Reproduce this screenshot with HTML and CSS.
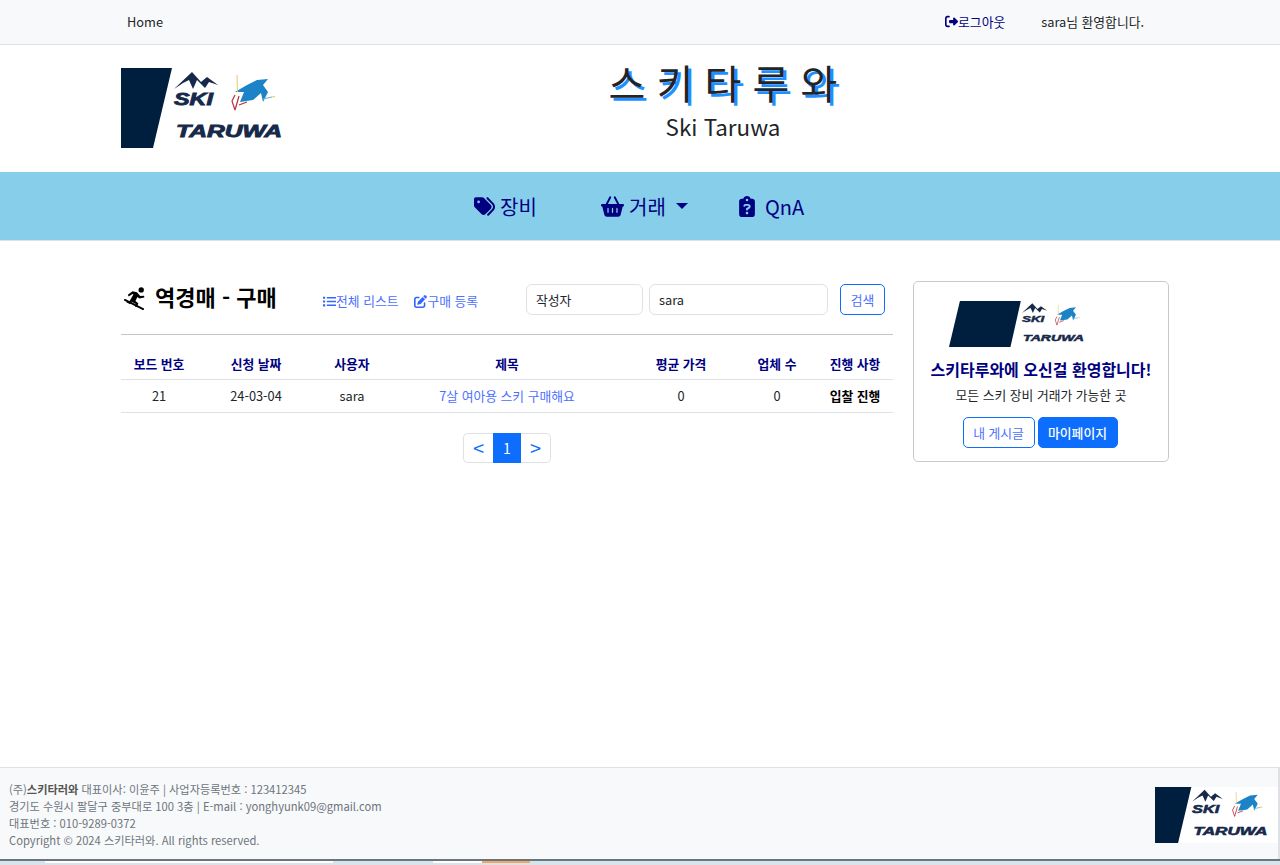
FILE: index.html
```html
<!DOCTYPE html>
<html lang="ko">
<head>
  <meta charset="UTF-8">
  <meta name="viewport" content="width=device-width, initial-scale=1.0">
  <title>스키타루와</title>
  <link rel="stylesheet" href="styles.css">
</head>
<body>
  <div class="topbar">
    <div class="topbar-inner">
      <a class="home-link" href="#">Home</a>
      <div class="topbar-right">
        <a class="logout-link" href="#">
          <svg class="icon-logout" viewBox="0 0 512 512"><path d="M377.9 105.9L500.7 228.7c7.2 7.2 11.3 17.1 11.3 27.3s-4.1 20.1-11.3 27.3L377.9 406.1c-6.4 6.4-15 9.9-24 9.9c-18.7 0-33.9-15.2-33.9-33.9l0-62.1-128 0c-17.7 0-32-14.3-32-32l0-64c0-17.7 14.3-32 32-32l128 0 0-62.1c0-18.7 15.2-33.9 33.9-33.9c9 0 17.6 3.6 24 9.9zM160 96L96 96c-17.7 0-32 14.3-32 32l0 256c0 17.7 14.3 32 32 32l64 0c17.7 0 32 14.3 32 32s-14.3 32-32 32l-64 0c-53 0-96-43-96-96L0 128C0 75 43 32 96 32l64 0c17.7 0 32 14.3 32 32s-14.3 32-32 32z"/></svg>로그아웃
        </a>
        <span class="welcome">sara님 환영합니다.</span>
      </div>
    </div>
  </div>

  <header class="site-header">
    <svg class="logo-main" viewBox="0 0 161 80">
      <polygon points="0,0 51,0 32,80 0,80" fill="#001f3f"/>
      <g id="logo-marks">
        <path d="M53 21 L71 4 L80 14 L86 9 L97 17 L88 14 L84 20 L76 12 L72 21 L68 12 L62 15 Z" fill="#16294a"/>
        <text x="53" y="37" class="logo-text" textLength="39" lengthAdjust="spacingAndGlyphs">SKI</text>
        <text x="55" y="69" class="logo-text" textLength="106" lengthAdjust="spacingAndGlyphs">TARUWA</text>
        <path d="M114 24 L126 17 L136 12 L147 11 L142 17 L147 24 L142 34 L140 25 L132 32 L119 34 L123 24 Z" fill="#1c83c6"/>
        <path d="M142 31 L151 29" stroke="#6fb3d8" stroke-width="1.200"/>
        <path d="M151 29 L154 28.500" stroke="#e8c86a" stroke-width="1.200"/>
        <path d="M116 7 L116.500 24" stroke="#e8c86a" stroke-width="1"/>
        <path d="M114 42 L111 33 L114 27 M114 42 L118 28 M118 37 L126 34" stroke="#b8313f" stroke-width="1.200" fill="none"/>
      </g>
    </svg>
    <div class="site-title">
      <h1>스 키 타 루 와</h1>
      <p>Ski Taruwa</p>
    </div>
  </header>

  <nav class="main-nav">
    <a href="#" class="nav-item nav-gear">
      <svg class="nav-icon" viewBox="0 0 512 512"><path d="M345 39.1L472.8 168.4c52.4 53 52.4 138.2 0 191.2L360.8 472.9c-9.3 9.4-24.5 9.5-33.9 .2s-9.5-24.5-.2-33.9L438.6 325.9c33.9-34.3 33.9-89.4 0-123.7L310.9 72.9c-9.3-9.4-9.2-24.6 .2-33.9s24.6-9.2 33.9 .2zM0 229.5V80C0 53.5 21.5 32 48 32H197.5c17 0 33.3 6.7 45.3 18.7l168 168c25 25 25 65.5 0 90.5L277.3 442.7c-25 25-65.5 25-90.5 0l-168-168C6.7 262.7 0 246.5 0 229.5zM144 144a32 32 0 1 0 -64 0 32 32 0 1 0 64 0z"/></svg>
      장비
    </a>
    <a href="#" class="nav-item nav-trade">
      <svg class="nav-icon nav-icon-basket" viewBox="0 0 576 512"><path d="M253.3 35.1c6.1-11.8 1.5-26.3-10.2-32.4s-26.3-1.5-32.4 10.2L117.6 192H32c-17.7 0-32 14.3-32 32s14.3 32 32 32L83.9 463.5C91 492 116.6 512 146 512H430c29.4 0 55-20 62.1-48.5L544 256c17.7 0 32-14.3 32-32s-14.3-32-32-32H458.4L365.3 12.9C359.2 1.2 344.7-3.4 332.9 2.7s-16.3 20.6-10.2 32.4L404.3 192H171.7L253.3 35.1zM192 304v96c0 8.8-7.2 16-16 16s-16-7.2-16-16V304c0-8.8 7.2-16 16-16s16 7.2 16 16zm96-16c8.8 0 16 7.2 16 16v96c0 8.8-7.2 16-16 16s-16-7.2-16-16V304c0-8.8 7.2-16 16-16zm128 16v96c0 8.8-7.2 16-16 16s-16-7.2-16-16V304c0-8.8 7.2-16 16-16s16 7.2 16 16z"/></svg>
      거래
      <span class="caret"></span>
    </a>
    <a href="#" class="nav-item nav-qna">
      <svg class="nav-icon nav-icon-clip" viewBox="0 0 384 512"><path fill-rule="evenodd" d="M192 0c-41.8 0-77.4 26.7-90.5 64H64C28.7 64 0 92.7 0 128V448c0 35.3 28.7 64 64 64H320c35.3 0 64-28.7 64-64V128c0-35.3-28.7-64-64-64H282.5C269.4 26.7 233.8 0 192 0zm0 64a32 32 0 1 1 0 64 32 32 0 1 1 0-64zM105.8 229.3c7.9-22.3 29.1-37.3 52.8-37.3h58.3c34.9 0 63.1 28.3 63.1 63.1c0 22.6-12.1 43.5-31.7 54.8L216 328.4c-.2 13-10.9 23.6-24 23.6c-13.3 0-24-10.7-24-24V314.5c0-8.6 4.6-16.5 12.1-20.8l44.3-25.4c4.7-2.7 7.6-7.7 7.6-13.1c0-8.4-6.8-15.1-15.1-15.1H158.6c-3.4 0-6.4 2.1-7.5 5.3l-.4 1.2c-4.4 12.5-18.2 19-30.6 14.6s-19-18.2-14.6-30.6l.4-1.2zM160 416a32 32 0 1 1 64 0 32 32 0 1 1 -64 0z"/></svg>
      QnA
    </a>
  </nav>

  <main class="content">
    <section class="board">
      <div class="board-head">
        <h2 class="board-title">
          <svg class="icon-snow" viewBox="0 0 24 24">
            <circle cx="19" cy="3" r="2.800"/>
            <path d="M5 8 L10 4.500 L14.500 5.500 L18 9.500 L22 9 L22.300 11 L17 12 L15 10.500 L13 14.500 L16 17 L14.500 21 L12.500 20.300 L13.400 17.800 L9 15.500 L7.500 18 L3.500 16 L4.200 14.500 L6.500 15.500 L10.800 7.800 L9.800 7.400 L6 10 Z"/>
            <path d="M2 13.500 L21 23" stroke="#000" stroke-width="2" stroke-linecap="round"/>
          </svg>
          역경매 - 구매
        </h2>
        <div class="board-links">
          <a href="#"><svg class="icon-small" viewBox="0 0 12 12"><path d="M0 1.500h2v2H0zM3.500 1.800H12v1.400H3.500zM0 5h2v2H0zM3.500 5.300H12v1.400H3.500zM0 8.500h2v2H0zM3.500 8.800H12v1.400H3.500z"/></svg>전체 리스트</a>
          <a href="#"><svg class="icon-small" viewBox="0 0 512 512"><path d="M471.6 21.7c-21.9-21.9-57.3-21.9-79.2 0L362.3 51.7l97.9 97.9 30.1-30.1c21.9-21.9 21.9-57.3 0-79.2L471.6 21.7zm-299.2 220c-6.1 6.1-10.8 13.6-13.5 21.9l-29.6 88.8c-2.9 8.6-.6 18.1 5.8 24.6s15.9 8.7 24.6 5.8l88.8-29.6c8.2-2.7 15.7-7.4 21.9-13.5L437.7 172.3 339.7 74.3 172.4 241.7zM96 64C43 64 0 107 0 160V416c0 53 43 96 96 96H352c53 0 96-43 96-96V320c0-17.7-14.3-32-32-32s-32 14.3-32 32v96c0 17.7-14.3 32-32 32H96c-17.7 0-32-14.3-32-32V160c0-17.7 14.3-32 32-32h96c17.7 0 32-14.3 32-32s-14.3-32-32-32H96z"/></svg>구매 등록</a>
        </div>
        <form class="search-form">
          <div class="search-select">작성자</div>
          <input class="search-input" type="text" value="sara">
          <button class="btn-search" type="button">검색</button>
        </form>
      </div>

      <table class="board-table">
        <colgroup>
          <col class="c-no"><col class="c-date"><col class="c-user"><col class="c-title"><col class="c-price"><col class="c-count"><col class="c-status">
        </colgroup>
        <thead>
          <tr>
            <th>보드 번호</th>
            <th>신청 날짜</th>
            <th>사용자</th>
            <th>제목</th>
            <th>평균 가격</th>
            <th>업체 수</th>
            <th>진행 사항</th>
          </tr>
        </thead>
        <tbody>
          <tr>
            <td>21</td>
            <td>24-03-04</td>
            <td>sara</td>
            <td><a href="#">7살 여아용 스키 구매해요</a></td>
            <td>0</td>
            <td>0</td>
            <td class="status">입찰 진행</td>
          </tr>
        </tbody>
      </table>

      <div class="pagination">
        <a href="#" class="page-arrow">&lt;</a>
        <a href="#" class="page-num active">1</a>
        <a href="#" class="page-arrow">&gt;</a>
      </div>
    </section>

    <aside class="side-card">
      <svg class="logo-card" viewBox="-74 0 235 80" preserveAspectRatio="none">
        <polygon points="-55,0 51,0 33,80 -74,80" fill="#001f3f"/>
        <use href="#logo-marks"/>
      </svg>
      <h3>스키타루와에 오신걸 환영합니다!</h3>
      <p>모든 스키 장비 거래가 가능한 곳</p>
      <div class="side-buttons">
        <a href="#" class="btn-outline">내 게시글</a>
        <a href="#" class="btn-solid">마이페이지</a>
      </div>
    </aside>
  </main>

  <footer class="site-footer">
    <div class="footer-text">
      <div>(주)<strong>스키타러와</strong> 대표이사: 이윤주 | 사업자등록번호 : 123412345</div>
      <div>경기도 수원시 팔달구 중부대로 100 3층 | E-mail : yonghyunk09@gmail.com</div>
      <div>대표번호 : 010-9289-0372</div>
      <div>Copyright © 2024 스키타러와. All rights reserved.</div>
    </div>
    <svg class="logo-footer" viewBox="0 0 176 80" preserveAspectRatio="none">
      <rect width="176" height="80" fill="#fff"/>
      <polygon points="0,0 52,0 33,80 0,80" fill="#001f3f"/>
      <use href="#logo-marks"/>
    </svg>
  </footer>
  <div class="bottom-line"></div>
  <div class="bottom-strip">
    <span class="seg-blue s1"></span>
    <span class="seg-white s2"></span>
    <span class="seg-blue s3"></span>
    <span class="seg-white s4"></span>
    <span class="seg-orange s5"></span>
    <span class="seg-blue s6"></span>
  </div>
  <div class="bottom-end"></div>
</body>
</html>
```
FILE: styles.css
```css
* {
  box-sizing: border-box;
}
html, body {
  height: 865px;
  overflow: hidden;
}
body {
  font-family: "Noto Sans CJK KR", "Noto Sans", sans-serif;
  margin: 0;
  padding: 0;
  background-color: #fff;
  color: #212529;
  display: flex;
  flex-direction: column;
}
a {
  text-decoration: none;
}

/* 로고 */
.logo-text {
  font-family: "Liberation Sans", sans-serif;
  font-size: 16px;
  font-weight: 700;
  font-style: italic;
  fill: #16294a;
  stroke: #16294a;
  stroke-width: 0.8;
}

/* 상단 바 */
.topbar {
  height: 45px;
  flex: none;
  background-color: #f8f9fa;
  border-bottom: 1px solid #dee2e6;
}
.topbar-inner {
  height: 42px;
  padding: 0 136px 0 127px;
  display: flex;
  align-items: center;
  justify-content: space-between;
  font-size: 12.8px;
}
.home-link {
  color: #212529;
}
.topbar-right {
  display: flex;
  align-items: center;
  gap: 36px;
}
.logout-link {
  color: #000080;
  display: flex;
  align-items: center;
}
.icon-logout {
  width: 13px;
  height: 13px;
  fill: #000080;
}

/* 헤더 */
.site-header {
  height: 127px;
  flex: none;
  padding: 23px 0 0 121px;
  display: flex;
  align-items: flex-start;
}
.logo-main {
  width: 161px;
  height: 80px;
  flex: none;
}
.site-title {
  width: 882px;
  margin-top: -16px;
  text-align: center;
}
.site-title h1 {
  margin: 0;
  font-size: 40px;
  font-weight: 400;
  line-height: 60px;
  text-shadow: 3px 3px 0 #1e90ff;
}
.site-title p {
  margin: -4px 0 0;
  font-size: 22.4px;
  line-height: 36px;
}

/* 메뉴 */
.main-nav {
  height: 69px;
  flex: none;
  background-color: #87ceeb;
  border-bottom: 1px solid #dee2e6;
  display: flex;
  align-items: center;
  font-size: 20px;
  padding-left: 474px;
}
.nav-item {
  color: #000080;
  display: flex;
  align-items: center;
}
.nav-gear {
  width: 127px;
  gap: 5px;
}
.nav-trade {
  width: 137px;
  gap: 5px;
}
.nav-qna {
  gap: 9px;
}
.nav-icon {
  width: 21px;
  height: 21px;
  fill: #000080;
  flex: none;
}
.nav-icon-basket {
  width: 23px;
}
.nav-icon-clip {
  width: 18px;
}
.caret {
  margin-left: 5px;
  border-top: 6px solid #000080;
  border-left: 6px solid transparent;
  border-right: 6px solid transparent;
}

/* 본문 */
.content {
  flex: 1;
  padding: 40px 0 0 121px;
  display: flex;
  align-items: flex-start;
  gap: 20px;
}
.board {
  width: 772px;
}
.board-head {
  height: 54px;
  border-bottom: 1px solid #c4c4c4;
  display: flex;
  align-items: flex-start;
  margin-bottom: 13px;
}
.board-title {
  width: 200px;
  margin: 1px 0 0 2px;
  font-size: 22px;
  font-weight: 700;
  line-height: 28px;
  color: #000;
  display: flex;
  align-items: center;
  gap: 9px;
}
.icon-snow {
  width: 23px;
  height: 23px;
  margin-top: 5px;
  fill: #000;
  flex: none;
}
.board-links {
  width: 203px;
  margin-top: 10px;
  display: flex;
  gap: 16px;
  font-size: 12.8px;
  line-height: 20px;
}
.board-links a {
  color: #4c6fff;
  display: flex;
  align-items: center;
}
.icon-small {
  width: 13px;
  height: 13px;
  fill: #3366ff;
  flex: none;
}
.search-form {
  display: flex;
  margin-top: 3px;
  font-size: 12.8px;
}
.search-select, .search-input {
  height: 31px;
  border: 1px solid #dee2e6;
  border-radius: 6px;
  padding: 0 9px;
  font-family: inherit;
  font-size: 12.8px;
  color: #212529;
  background-color: #fff;
}
.search-select {
  width: 117px;
  line-height: 29px;
}
.search-input {
  width: 179px;
  margin-left: 6px;
}
.btn-search {
  width: 45px;
  height: 31px;
  margin-left: 12px;
  padding: 0;
  border: 1px solid #0d6efd;
  border-radius: 5px;
  background-color: #fff;
  color: #4c6fff;
  font-family: inherit;
  font-size: 12.8px;
}

/* 표 */
.board-table {
  width: 772px;
  border-collapse: collapse;
  table-layout: fixed;
  font-size: 12.8px;
}
.c-no { width: 76px; }
.c-date { width: 118px; }
.c-user { width: 74px; }
.c-title { width: 236px; }
.c-price { width: 112px; }
.c-count { width: 80px; }
.c-status { width: 76px; }
.board-table th {
  height: 31px;
  padding: 0;
  font-size: 12.8px;
  font-weight: 700;
  text-align: center;
  color: #000080;
  border-bottom: 1px solid #dee2e6;
}
.board-table td {
  height: 33px;
  padding: 0;
  text-align: center;
  border-bottom: 1px solid #dee2e6;
}
.board-table td a {
  color: #4c6fff;
}
.board-table .status {
  font-weight: 700;
  color: #000;
}

/* 페이지 */
.pagination {
  margin-top: 20px;
  display: flex;
  justify-content: center;
}
.pagination a {
  height: 30px;
  display: flex;
  align-items: center;
  justify-content: center;
  font-size: 14px;
  border: 1px solid #dee2e6;
  color: #0d6efd;
}
.page-arrow {
  width: 30px;
  font-size: 20px !important;
}
.page-arrow:first-child {
  border-radius: 5px 0 0 5px;
  border-right: 0 !important;
}
.page-arrow:last-child {
  border-radius: 0 5px 5px 0;
  border-left: 0 !important;
}
.pagination .active {
  width: 28px;
  background-color: #0d6efd;
  border-color: #0d6efd;
  color: #fff;
}

/* 사이드 카드 */
.side-card {
  width: 256px;
  height: 181px;
  border: 1px solid #c9c9c9;
  border-radius: 5px;
  padding: 19px 0 0;
  display: flex;
  flex-direction: column;
  align-items: center;
}
.logo-card {
  width: 135px;
  height: 46px;
  flex: none;
  margin-right: 50px;
}
.side-card h3 {
  margin: 10px 0 0;
  font-size: 16px;
  font-weight: 700;
  line-height: 24px;
  color: #000080;
}
.side-card p {
  margin: 4px 0 0;
  font-size: 12.8px;
  line-height: 20px;
}
.side-buttons {
  margin: 12px 2px 0 0;
  display: flex;
  gap: 3px;
  font-size: 12.8px;
}
.side-buttons a {
  height: 31px;
  display: flex;
  align-items: center;
  justify-content: center;
  border-radius: 5px;
  border: 1px solid #0d6efd;
}
.btn-outline {
  width: 72px;
  color: #4c6fff;
}
.btn-solid {
  width: 80px;
  background-color: #0d6efd;
  color: #fff;
  font-weight: 500;
}

/* 푸터 */
.site-footer {
  height: 92px;
  flex: none;
  background-color: #f8f9fa;
  border-top: 1px solid #dee2e6;
  border-right: 2px solid #dee2e6;
  padding: 13px 0 0 9px;
  display: flex;
  justify-content: space-between;
  align-items: flex-start;
  font-size: 11.2px;
  line-height: 17px;
  color: #6c757d;
}
.footer-text strong {
  font-weight: 700;
  color: #555;
}
.logo-footer {
  width: 123px;
  height: 56px;
  margin-top: 6px;
  flex: none;
}
.bottom-line {
  height: 2px;
  flex: none;
  background-color: #6c757d;
}
.bottom-strip {
  height: 2px;
  flex: none;
  display: flex;
}
.bottom-strip span {
  display: block;
  height: 2px;
}
.bottom-end {
  height: 2px;
  flex: none;
  background-color: #dee2e6;
}
.seg-blue { background-color: #cfe8f0; }
.seg-white { background-color: #fff; }
.seg-orange { background-color: #f2a766; }
.s1 { width: 45px; }
.s2 { width: 288px; }
.s3 { width: 100px; }
.s4 { width: 49px; }
.s5 { width: 48px; }
.s6 { flex: 1; }
```
